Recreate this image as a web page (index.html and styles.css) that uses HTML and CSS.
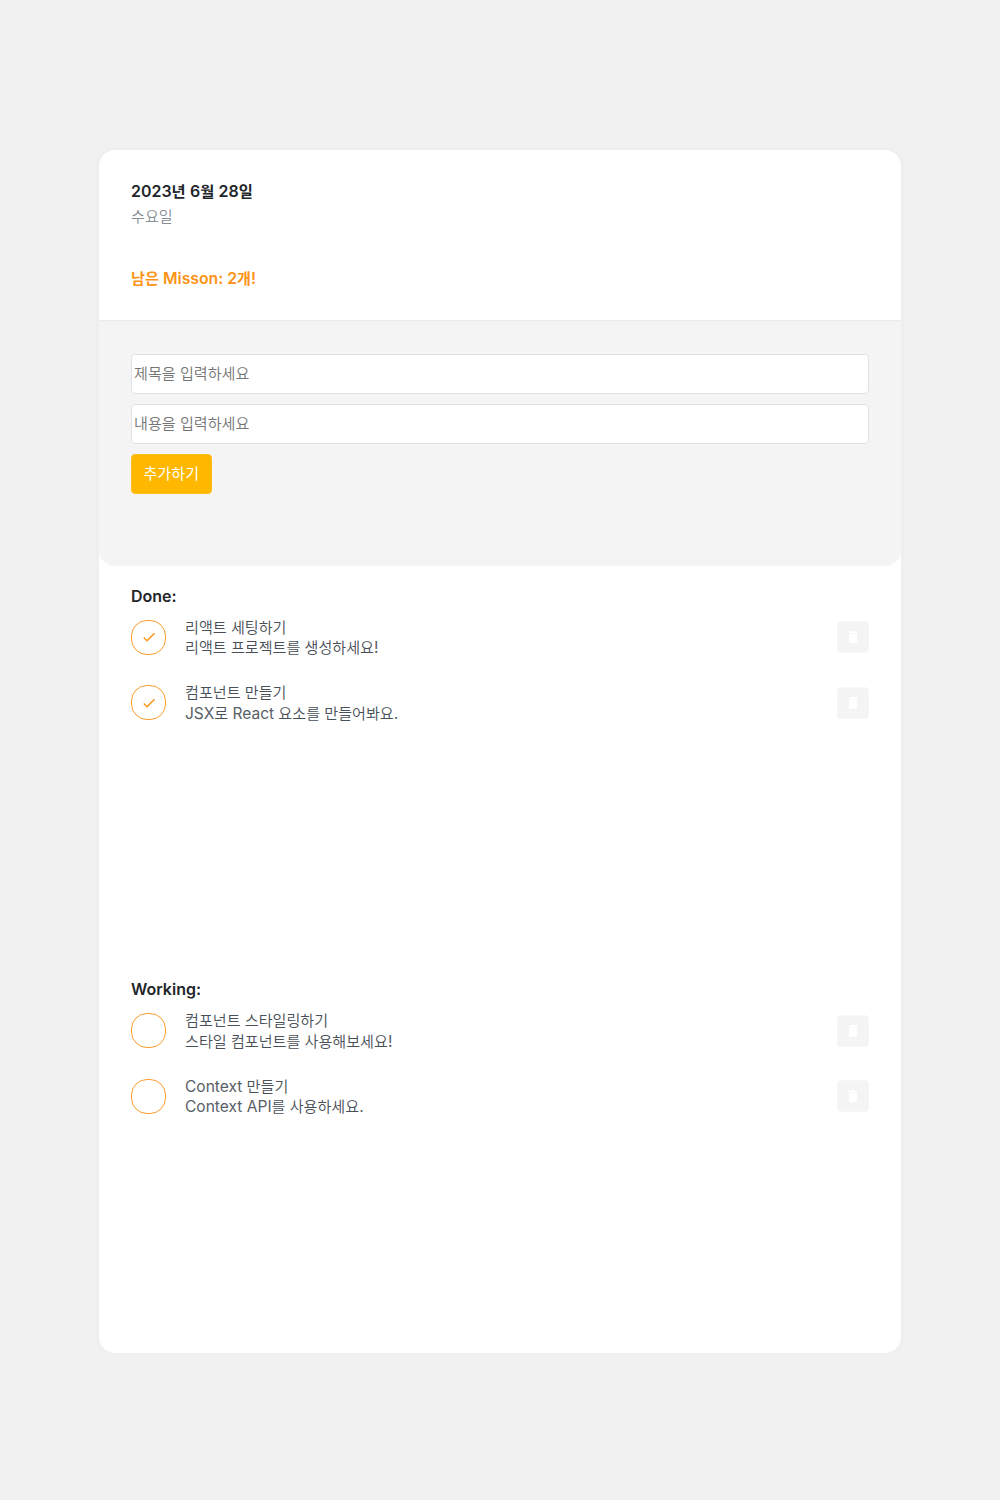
FILE: index.html
```html
<!DOCTYPE html>
<html lang="ko">
<head>
<meta charset="utf-8">
<title>Todo List</title>
<link rel="stylesheet" href="styles.css">
</head>
<body>
<svg class="defs" aria-hidden="true">
  <symbol id="check" viewBox="0 0 24 24"><path d="M9 16.2 4.8 12l-1.400 1.400L9 19 21 7l-1.400-1.400z"/></symbol>
  <symbol id="trash" viewBox="0 0 24 24"><path d="M6 19c0 1.100.9 2 2 2h8c1.100 0 2-.9 2-2V7H6v12zM19 4h-3.500l-1-1h-5l-1 1H5v2h14V4z"/></symbol>
</svg>
<main class="card">
  <header class="head">
    <h1 class="date"><span class="en">2023</span>년 <span class="en">6</span>월 <span class="en">28</span>일</h1>
    <div class="day">수요일</div>
    <div class="left">남은 <span class="en">Misson: 2</span>개<span class="en">!</span></div>
  </header>
  <form class="form">
    <input class="field" placeholder="제목을 입력하세요">
    <input class="field" placeholder="내용을 입력하세요">
    <button class="add" type="button">추가하기</button>
  </form>
  <section class="list">
    <h2 class="title">Done:</h2>
    <div class="item">
      <div class="circle"><svg class="check"><use href="#check"/></svg></div>
      <div class="text"><p>리액트 세팅하기</p><p>리액트 프로젝트를 생성하세요<span class="en">!</span></p></div>
      <button class="remove" type="button"><svg class="trash"><use href="#trash"/></svg></button>
    </div>
    <div class="item">
      <div class="circle"><svg class="check"><use href="#check"/></svg></div>
      <div class="text"><p>컴포넌트 만들기</p><p><span class="en">JSX</span>로 <span class="en">React</span> 요소를 만들어봐요<span class="en">.</span></p></div>
      <button class="remove" type="button"><svg class="trash"><use href="#trash"/></svg></button>
    </div>
  </section>
  <section class="list">
    <h2 class="title">Working:</h2>
    <div class="item">
      <div class="circle"></div>
      <div class="text"><p>컴포넌트 스타일링하기</p><p>스타일 컴포넌트를 사용해보세요<span class="en">!</span></p></div>
      <button class="remove" type="button"><svg class="trash"><use href="#trash"/></svg></button>
    </div>
    <div class="item">
      <div class="circle"></div>
      <div class="text"><p><span class="en">Context</span> 만들기</p><p><span class="en">Context API</span>를 사용하세요<span class="en">.</span></p></div>
      <button class="remove" type="button"><svg class="trash"><use href="#trash"/></svg></button>
    </div>
  </section>
</main>
</body>
</html>
```
FILE: styles.css
```css
* { box-sizing: border-box; }
body {
  margin: 0;
  min-height: 1500px;
  background: #f1f1f1;
  color: #495057;
  font-family: "Noto Sans CJK KR", sans-serif;
  font-size: 15.1px;
  font-weight: 350;
}
h1, h2, p { margin: 0; }
.defs { position: absolute; width: 0; height: 0; }
.en { font-family: Inter, sans-serif; font-size: 1.03em; font-weight: 400; color: #596067; }
.card {
  width: 802px;
  height: 1202.5px;
  margin: 150px 0 0 99px;
  background: #fff;
  border-radius: 16px;
  box-shadow: 0 0 8px rgba(0, 0, 0, .03);
  overflow: hidden;
}
.head { height: 171px; padding: 28px 32px 0; border-bottom: 1px solid #e9ecef; }
.date { color: #212529; font-size: 15.3px; font-weight: 700; line-height: 24px; }
.date .en, .left .en { font-size: 1.045em; font-weight: 600; color: inherit; }
.day { color: #868e96; line-height: 22px; }
.left { margin-top: 39px; color: #fd9316; font-weight: 700; line-height: 24px; }
.form {
  display: flex;
  flex-direction: column;
  align-items: flex-start;
  gap: 10px;
  height: 245.4px;
  padding: 33px 32px 0;
  background: #f4f4f4;
  border-radius: 0 0 16px 16px;
}
.field {
  width: 100%;
  height: 40px;
  padding: 0 2px 4px;
  border: 1px solid #dee2e6;
  border-radius: 4px;
  background: #fff;
  font: inherit;
}
.field::placeholder { color: #757575; opacity: 1; }
.add {
  width: 80.5px;
  height: 40px;
  padding: 0 0 4px;
  border: 1px solid #fdbd1c;
  border-radius: 4px;
  background: #ffb700;
  color: #fff;
  font: inherit;
  font-weight: 400;
}
.list { height: 393.6px; padding: 18.5px 32px 0; }
.title { margin-bottom: 9.5px; color: #212529; font: 600 16px/22px Inter, sans-serif; }
.item { display: flex; align-items: center; height: 42px; margin-bottom: 23.2px; }
.circle {
  display: flex;
  align-items: center;
  justify-content: center;
  width: 35px;
  height: 35px;
  margin-right: 19px;
  border: 1px solid #fd9d2e;
  border-radius: 16px;
}
.check { width: 16px; height: 16px; fill: #fd9316; }
.text { flex: 1; padding-bottom: 2px; line-height: 20.5px; }
.text p { height: 20.5px; }
.remove {
  display: flex;
  align-items: center;
  justify-content: center;
  width: 32px;
  height: 32px;
  padding: 0;
  border: 1px solid #f7f7f7;
  border-radius: 4px;
  background: #f4f4f4;
}
.trash { width: 16px; height: 16px; fill: #fff; }
```
